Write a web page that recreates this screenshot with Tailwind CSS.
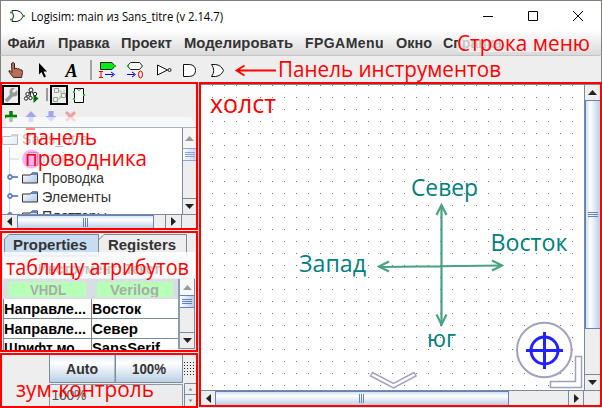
<!DOCTYPE html>
<html lang="ru">
<head>
<meta charset="utf-8">
<title>Logisim</title>
<script src="https://cdn.jsdelivr.net/npm/@tailwindcss/browser@4"></script>
</head>
<body class="w-[602px] h-[408px] overflow-hidden bg-[#eee] font-['Liberation_Sans',sans-serif]">
<div class="relative w-[602px] h-[408px] flex flex-col overflow-hidden border-t border-[#857f80]">
  <!-- title bar -->
  <header class="h-[29px] shrink-0 bg-white flex items-center border-x border-[#857f80] pl-[9px]">
    <svg class="w-[15px] h-[14px] shrink-0" viewBox="0 0 15 14" fill="none"><path d="M2 1.5H7Q11 2 13.5 7Q11 12 7 12.5H2Q5 7 2 1.5Z" stroke="#222"/><path d="M0 3.5H3M0 10.5H3" stroke="#0a0" stroke-width="1.6"/><path d="M12.5 7H15" stroke="#0a0" stroke-width="1.6"/></svg>
    <svg class="w-[200px] h-[24px] ml-[5px] shrink-0"><text x="1" y="16.500" textLength="192" lengthAdjust="spacingAndGlyphs" class="font-['Open_Sans',sans-serif] text-[13px]" fill="#000">Logisim: main из Sans_titre (v 2.14.7)</text></svg>
    <div class="ml-auto mr-[18px] flex items-center gap-[35px]">
      <svg class="w-[10px] h-[10px]" viewBox="0 0 10 10"><path d="M0 5.5H10" stroke="#000"/></svg>
      <svg class="w-[10px] h-[10px]" viewBox="0 0 10 10"><path d="M.5 .5H9.5V9.5H.5Z" stroke="#000" fill="none"/></svg>
      <svg class="w-[10px] h-[10px]" viewBox="0 0 10 10"><path d="M0 0L10 10M10 0L0 10" stroke="#000"/></svg>
    </div>
  </header>
  <!-- menu bar -->
  <nav class="h-[25px] shrink-0 border-x border-[#857f80] bg-linear-to-b from-white to-[#dadada]">
    <svg class="w-[600px] h-[25px] block font-['Liberation_Sans',sans-serif] font-bold text-[14px]" fill="#333">
      <text x="6.500" y="18" textLength="37.500" lengthAdjust="spacingAndGlyphs">Файл</text>
      <text x="57" y="18" textLength="51.500" lengthAdjust="spacingAndGlyphs">Правка</text>
      <text x="120" y="18" textLength="51" lengthAdjust="spacingAndGlyphs">Проект</text>
      <text x="183" y="18" textLength="109" lengthAdjust="spacingAndGlyphs">Моделировать</text>
      <text x="304" y="18" textLength="78.500">FPGAMenu</text>
      <text x="395" y="18" textLength="36" lengthAdjust="spacingAndGlyphs">Окно</text>
      <text x="442" y="18" textLength="59" lengthAdjust="spacingAndGlyphs">Справка</text>
    </svg>
  </nav>
  <!-- toolbar -->
  <div class="h-[27px] shrink-0 border-t border-t-[#c4c4c4] border-x border-x-[#857f80] bg-[#eee] flex items-center">
    <svg class="w-[235px] h-[26px] block" viewBox="1 56 235 26" fill="none">
      <path d="M11.500 63.500Q13 61.500 14.500 63.500V69L16 68L17.500 69L19 68.500L20.500 70L22 70L22.500 72.500L21.500 77.500H13.500L9.500 72.500Q8 70.500 10 70.500L12 72.500Z" fill="#b8705a" stroke="#402018"/>
      <path d="M39 63L39 74.500L41.500 72L44 77.500L46 76.500L43.500 71.500H47Z" fill="#000"/>
      <text x="65.500" y="77" fill="#000" class="font-['Liberation_Serif',serif] font-bold italic text-[18px]">A</text>
      <path d="M91 60V80" stroke="#888" stroke-width="1.500"/>
      <path d="M100.500 62.500H112L115 66L112 69.500H100.500Z" fill="#0e1" stroke="#222"/>
      <path d="M130.500 62.500H139.500L142.500 66L139.500 69.500H130.500L127.500 66Z" fill="#fff" stroke="#222"/>
      <path d="M114 66H116M127 66H129" stroke="#0c0" stroke-width="2"/>
      <path d="M99 71.500H103M101 71.500V77.500M99 77.500H103" stroke="#e00"/>
      <path d="M105 74.500H113M111 72L114.500 74.500L111 77M127 74.500H134M132 72L135.500 74.500L132 77" stroke="#00d"/>
      <ellipse cx="140.500" cy="74.500" rx="2" ry="3.500" stroke="#e00"/>
      <path d="M157.500 65V75L167.500 70Z" fill="#fff" stroke="#111"/><circle cx="169.500" cy="70" r="1.500" fill="#fff" stroke="#111"/>
      <path d="M183.500 64.500H189.500Q195.500 65 195.500 70.500T189.500 76.500H183.500Z" fill="#fff" stroke="#111"/>
      <path d="M211.500 64.500H215.500Q221 65 223.500 70.500Q221 76 215.500 76.500H211.500Q216 70.500 211.500 64.500Z" fill="#fff" stroke="#111"/>
    </svg>
  </div>
  <!-- work area -->
  <main class="flex h-[326px] shrink-0">
    <aside class="w-[198px] shrink-0 flex flex-col gap-px">
      <!-- explorer -->
      <section class="h-[148px] border-2 border-[#f00] bg-[#eee] flex flex-col">
        <svg class="w-[194px] h-[43px] block shrink-0" viewBox="2 84 194 43" fill="none">
          <path d="M3 86H19V104H3ZM51 86H67V104H51Z" stroke="#000" stroke-width="2"/>
          <path d="M6 101L12 95" stroke="#999" stroke-width="3.500"/><path d="M17 90L14 93L12 91L15 88Q10 87 9.500 91.500T14 96.500T17 90Z" fill="#999"/>
          <path d="M26.500 97L31 90.500L35.500 97M31 90L30 97" stroke="#222"/><circle cx="31" cy="90" r="2" fill="#fff" stroke="#222"/><circle cx="27.500" cy="94" r="1.700" fill="#fff" stroke="#222"/><circle cx="26" cy="98.500" r="1.700" fill="#fff" stroke="#222"/><circle cx="30.500" cy="98" r="1.700" fill="#fff" stroke="#222"/><circle cx="35" cy="94" r="1.700" fill="#fff" stroke="#222"/><path d="M33.500 94.500V103L38.500 98.500Z" fill="#060"/>
          <path d="M47 88V101" stroke="#999" stroke-width="2"/>
          <path d="M54.500 88.500H58.500V92.500H54.500ZM53.500 97.500H57.500V101.500H53.500ZM61.500 93.500H65.500V97.500H61.500Z" stroke="#999"/><path d="M59 91H61V94M58 99H60V96H62M64 90V93" stroke="#8c8"/>
          <path d="M74.500 88.500H83.500V102.500H74.500Z" fill="#fff" stroke="#000"/><path d="M77 89Q79 92 81 89" stroke="#777"/><path d="M73 92H75M73 99H75M83 95H85" stroke="#0d0" stroke-width="2"/>
          <path d="M11 111V122M5 116.500H17" stroke="#067d06" stroke-width="3.500"/>
          <path d="M31 111L36.500 117H33.500V122H28.500V117H25.500Z" fill="#a4a4ed"/>
          <path d="M51 122L56.500 116H53.500V111H48.500V116H45.500Z" fill="#a4a4ed"/>
          <path d="M66 112L75 121M75 112L66 121" stroke="#eda0a0" stroke-width="3"/>
          <path d="M6 127V117H190Q194 118 194 127Z" fill="#fff" fill-opacity=".6"/>
        </svg>
        <div class="flex h-[87px] border-t border-[#a9b6c2] shrink-0">
          <svg class="w-[180px] h-[86px] block bg-white" viewBox="2 128 180 86">
            <defs><linearGradient id="fold" x1="0" y1="0" x2="1" y2="1"><stop offset="0" stop-color="#fff"/><stop offset="1" stop-color="#a9c8e6"/></linearGradient>
            <g id="folder"><path d="M.5 3.500H8.500L10 1.500H15.500V11.500H.5Z" fill="url(#fold)" stroke="#333"/><path d="M9 2.500L10.500 1H15.500V3.500H9Z" fill="#6382bf"/></g>
            <g id="handle" fill="#fff" stroke="#6382bf" stroke-width="1.800"><path d="M4 3.500H11"/><circle cx="3" cy="3.500" r="2"/></g></defs>
            <path d="M9.500 147V214M10 159H19" stroke="#c8d4e6" fill="none"/>
            <use href="#folder" x="2" y="133" opacity=".35"/>
            <text x="22" y="144" textLength="66" class="text-[14px]" fill="#bbb">Sans_titre</text>
            <path d="M26 129H35" stroke="#f66" stroke-width="1.500"/>
            <circle cx="31.500" cy="159" r="9.500" fill="#ffb0ff"/>
            <path d="M28.500 152.500H37.500V165.500H28.500Z" fill="none" stroke="#b9a"/>
            <text x="42" y="163" class="text-[14px]" fill="#ccc">main</text>
            <use href="#handle" x="7" y="173.500"/><use href="#folder" x="22" y="171.500"/>
            <use href="#handle" x="7" y="192.500"/><use href="#folder" x="22" y="190.500"/>
            <use href="#handle" x="7" y="211.500"/><use href="#folder" x="22" y="209.500"/>
            <g class="text-[14px]" fill="#333"><text x="42" y="183" textLength="62" lengthAdjust="spacingAndGlyphs">Проводка</text><text x="42" y="202" textLength="69" lengthAdjust="spacingAndGlyphs">Элементы</text><text x="42" y="221" textLength="65" lengthAdjust="spacingAndGlyphs">Плоттеры</text></g>
          </svg>
          <div class="w-[14px] border-l border-[#7a8a99] flex flex-col bg-[#eee]">
            <div class="h-[20px] flex items-center justify-center bg-[#f5f5f5]"><svg class="w-[9px] h-[5px]"><path d="M0 5L4.500 0L9 5Z" fill="#999"/></svg></div>
            <div class="h-[13px] border-y border-[#8ea5cf] bg-linear-to-r from-white to-[#c4d8ee] flex items-center justify-center"><svg class="w-[10px] h-[6px]"><path d="M0 .5H10M0 2.500H10M0 4.500H10" stroke="#8ba4d6"/></svg></div>
            <div class="mt-auto h-[16px] border-t border-[#7a8a99] flex items-center justify-center"><svg class="w-[9px] h-[5px]"><path d="M0 0L4.500 5L9 0Z" fill="#222"/></svg></div>
          </div>
        </div>
        <div class="h-[14px] border-t border-[#7a8a99] flex bg-[#eee]">
          <div class="w-[15px] flex items-center justify-center"><svg class="w-[5px] h-[9px]"><path d="M5 0L0 4.500L5 9Z" fill="#222"/></svg></div>
          <div class="w-[137px] border border-b-0 border-[#6382bf] bg-linear-to-b from-[#d5e3f2] via-white via-30% to-[#b8cfe5] flex items-center justify-center"><svg class="w-[6px] h-[9px]"><path d="M.5 0V9M2.500 0V9M4.500 0V9" stroke="#6382bf"/></svg></div>
          <div class="w-[12px] border-r border-[#7a8a99]"></div>
          <div class="w-[16px] border-r border-[#7a8a99] flex items-center justify-center"><svg class="w-[5px] h-[9px]"><path d="M0 0L5 4.500L0 9Z" fill="#222"/></svg></div>
        </div>
      </section>
      <!-- attributes -->
      <section class="h-[121px] border-2 border-[#f00] bg-[#eee] flex flex-col">
        <svg class="w-[194px] h-[46px] block shrink-0" viewBox="2 233 194 46" fill="none">
          <path d="M4.500 256V239L9 234.500H98.500V256Z" fill="#c8ddf2" stroke="#7a8a99"/>
          <path d="M98.500 256V240L104 234.500H186.500V256" fill="#eee" stroke="#7a8a99"/>
          <g class="text-[14px] font-bold" fill="#333"><text x="13" y="249.500" textLength="74" lengthAdjust="spacingAndGlyphs">Properties</text><text x="108" y="249.500" textLength="68" lengthAdjust="spacingAndGlyphs">Registers</text></g>
          <path d="M3 252H195V278H3Z" fill="#fff" fill-opacity=".8"/>
          <text x="38" y="274" textLength="122" class="text-[14px] font-bold" fill="#c4c4c4">Инструмент: Текст</text>
        </svg>
        <div class="flex h-[71px]">
          <div class="w-[175px] ml-px bg-[#d9dee3] flex flex-col">
            <div class="h-[20px] shrink-0 flex items-center pl-[6px] gap-[11px]">
              <svg class="w-[77px] h-[15px] bg-[#b8ffb8] text-[14px] font-bold" fill="#aaa"><text x="21" y="13" textLength="36" lengthAdjust="spacingAndGlyphs">VHDL</text></svg>
              <svg class="w-[76px] h-[15px] bg-[#b8ffb8] text-[14px] font-bold" fill="#aaa"><text x="13" y="13" textLength="49" lengthAdjust="spacingAndGlyphs">Verilog</text></svg>
            </div>
            <svg class="w-[175px] h-[51px] block bg-white shrink-0 text-[14px] font-bold" viewBox="3 299 175 51">
              <path d="M3.500 299V350M91.500 299V350M3 318.500H178M3 338.500H178" stroke="#7a8a99"/>
              <text x="4" y="314" textLength="82" lengthAdjust="spacingAndGlyphs">Направле...</text><text x="92" y="314" textLength="49" lengthAdjust="spacingAndGlyphs">Восток</text>
              <text x="4" y="333.500" textLength="82" lengthAdjust="spacingAndGlyphs">Направле...</text><text x="92" y="333.500" textLength="46" lengthAdjust="spacingAndGlyphs">Север</text>
              <text x="4" y="353" textLength="82" lengthAdjust="spacingAndGlyphs">Шрифт мо...</text><text x="92" y="353" textLength="68" lengthAdjust="spacingAndGlyphs">SansSerif</text>
            </svg>
          </div>
          <div class="w-[2px] h-[70px] bg-[#8a9cb5]"></div>
          <div class="w-[15px] h-[70px] border-r border-[#7a8a99] flex flex-col bg-[#eee]">
            <div class="h-[16px] flex items-center justify-center bg-[#f8f8f8]"><svg class="w-[9px] h-[5px]"><path d="M0 5L4.500 0L9 5Z" fill="#999"/></svg></div>
            <div class="h-[13px] border-y border-[#6382bf] bg-linear-to-r from-white to-[#b8cfe5] flex items-center justify-center"><svg class="w-[10px] h-[6px]"><path d="M0 .5H10M0 2.500H10M0 4.500H10" stroke="#6382bf"/></svg></div>
            <div class="mt-auto h-[17px] border-y border-[#7a8a99] flex items-center justify-center"><svg class="w-[9px] h-[5px]"><path d="M0 0L4.500 5L9 0Z" fill="#222"/></svg></div>
          </div>
        </div>
      </section>
      <!-- zoom control -->
      <section class="h-[55px] border-2 border-[#f00] bg-[#eee]">
        <svg class="w-[194px] h-[51px] block text-[14px] font-bold" viewBox="2 355 194 51" fill="none">
          <defs><linearGradient id="btn" x1="0" y1="0" x2="0" y2="1"><stop offset="0" stop-color="#dde8f3"/><stop offset=".3" stop-color="#fff"/><stop offset="1" stop-color="#b8cfe5"/></linearGradient></defs>
          <path d="M49.500 354.500H115V382.500H49.500ZM115.500 354.500H182.500V382.500H115.500Z" fill="url(#btn)" stroke="#7a8a99"/>
          <text x="66" y="374" textLength="32" lengthAdjust="spacingAndGlyphs" fill="#333">Auto</text><text x="132" y="374" textLength="34" lengthAdjust="spacingAndGlyphs" fill="#333">100%</text>
          <path d="M184 362.500H195M184 365.500H195M184 368.500H195M184 371.500H195M184 374.500H195" stroke="#222" stroke-dasharray="1 2"/>
          <path d="M49.500 406V384.500H182.500V406" stroke="#8a98a6" fill="#ececec"/>
          <text x="51.500" y="399.500" textLength="35" class="font-normal" fill="#555">100%</text>
          <path d="M184.500 383.500H196M184.500 394.500H196M184.500 383.500V406" stroke="#7a8a99"/>
          <path d="M188.500 390.500L190.500 388L192.500 390.500ZM188.500 399.500L190.500 402L192.500 399.500Z" fill="#7a8a99"/>
        </svg>
      </section>
    </aside>
    <div class="w-px bg-[#ddd]"></div>
    <!-- canvas -->
    <section class="w-[403px] h-[325px] border-2 border-[#f00] flex flex-col bg-white">
      <div class="flex h-[306px] border-t border-[#7a8a99] shrink-0">
        <svg class="w-[383px] h-[305px] block bg-white" viewBox="201 85 383 305" fill="none">
          <defs><pattern id="dots" x="212" y="85" width="12" height="12" patternUnits="userSpaceOnUse"><rect width="1" height="1" fill="#777"/></pattern></defs>
          <rect x="212" y="85" width="372" height="305" fill="url(#dots)"/>
          <g stroke="#4aa37c" stroke-width="2.200"><path d="M441.500 205V325M379 267L502 265.500"/><path d="M436.500 215L441.500 205L446.500 215M436.500 314.500L441.500 324.500L446.500 314.500M389 261.500L379 266.500L389 271.500M492 260.500L502 265.500L492 270.500"/></g>
          <g fill="#008080" class="font-['Open_Sans',sans-serif] text-[23px]">
            <text x="411" y="196" textLength="67" lengthAdjust="spacingAndGlyphs">Север</text>
            <text x="490.500" y="251" textLength="77" lengthAdjust="spacingAndGlyphs">Восток</text>
            <text x="299" y="272" textLength="67" lengthAdjust="spacingAndGlyphs">Запад</text>
            <text x="427" y="347" textLength="29" lengthAdjust="spacingAndGlyphs">юг</text>
          </g>
          <path d="M370.500 376L372.500 372.500L393.500 383.500L414 372.500L416 376L393.500 388Z" fill="#fff" stroke="#a0a0c4" stroke-width="1.500"/>
          <circle cx="544.300" cy="350" r="27.300" fill="#fff" stroke="#a0a0c4" stroke-width="2"/>
          <path d="M575.500 356.500H581.500V387.500H550.500V381.500H575.500Z" fill="#fff" stroke="#a0a0c4" stroke-width="1.500"/>
          <g stroke="#2222ff" stroke-width="3"><circle cx="544.500" cy="350.500" r="13.500"/><path d="M526 350.500H563M544.500 332V369"/></g>
        </svg>
        <div class="w-[16px] border-l border-[#7a8a99] bg-[#eee] flex flex-col">
          <div class="h-[15px] flex items-center justify-center"><svg class="w-[9px] h-[5px]"><path d="M0 5L4.500 0L9 5Z" fill="#222"/></svg></div>
          <div class="h-[229px] border border-[#6382bf] border-r-0 bg-linear-to-r from-[#cfdff0] via-white via-30% to-[#b8cfe5] flex items-center justify-center"><svg class="w-[10px] h-[6px]"><path d="M0 .5H10M0 2.500H10M0 4.500H10" stroke="#6382bf"/></svg></div>
          <div class="mt-auto h-[16px] border-t border-[#7a8a99] flex items-center justify-center"><svg class="w-[9px] h-[5px]"><path d="M0 0L4.500 5L9 0Z" fill="#222"/></svg></div>
        </div>
      </div>
      <div class="h-[15px] border-t border-[#7a8a99] bg-[#eee] flex">
        <div class="w-[14px] flex items-center justify-center"><svg class="w-[5px] h-[9px]"><path d="M5 0L0 4.500L5 9Z" fill="#222"/></svg></div>
        <div class="w-[294px] border border-[#6382bf] border-b-0 bg-linear-to-b from-[#cfdff0] via-white via-30% to-[#b8cfe5] flex items-center justify-center"><svg class="w-[6px] h-[9px]"><path d="M.5 0V9M2.500 0V9M4.500 0V9" stroke="#6382bf"/></svg></div>
        <div class="w-[60px] border-r border-[#7a8a99]"></div>
        <div class="w-[15px] border-r border-[#7a8a99] flex items-center justify-center"><svg class="w-[5px] h-[9px]"><path d="M0 0L5 4.500L0 9Z" fill="#222"/></svg></div>
      </div>
    </section>
  </main>
  <!-- callouts -->
  <svg class="absolute left-0 -top-px w-[602px] h-[408px]" viewBox="0 0 602 408" fill="none">
    <path d="M458 36H563V52H458Z" fill="#f4f4f4" fill-opacity=".75"/>
    <path d="M276 70.500H237M244.500 65.500L236.500 70.500L244.500 75.500" stroke="#f00" stroke-width="1.800"/>
    <g fill="#f00" class="font-['Open_Sans',sans-serif] text-[21px]">
      <text x="457" y="50.500" textLength="133" lengthAdjust="spacingAndGlyphs">Строка меню</text>
      <text x="278" y="76.500" textLength="223" lengthAdjust="spacingAndGlyphs">Панель инструментов</text>
      <text x="25" y="145" textLength="72" lengthAdjust="spacingAndGlyphs">панель</text>
      <text x="25" y="166" textLength="122" lengthAdjust="spacingAndGlyphs">проводника</text>
      <text x="6" y="275" textLength="183" lengthAdjust="spacingAndGlyphs">таблицу атрибутов</text>
      <text x="16" y="397" textLength="138" lengthAdjust="spacingAndGlyphs">зум-контроль</text>
      <text x="210" y="113" textLength="66" lengthAdjust="spacingAndGlyphs" class="text-[25px]">холст</text>
    </g>
  </svg>
</div>
</body>
</html>
